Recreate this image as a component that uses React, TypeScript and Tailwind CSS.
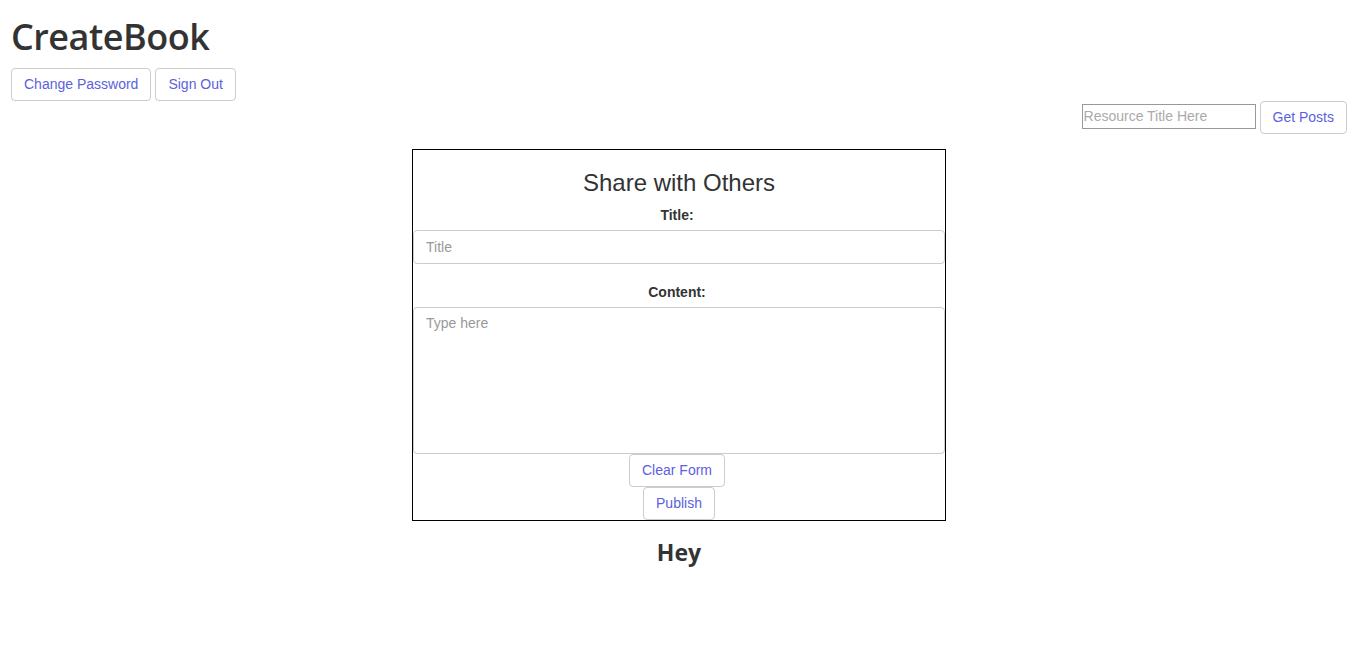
export default function App() {
  const btn =
    "inline-block rounded border border-[#ccc] bg-white px-3 text-sm leading-[19px] py-[6px] text-[#5b5fe0]";
  return (
    <div className="min-h-screen bg-white text-[#333] font-['Liberation_Sans',Arial,sans-serif] text-sm">
      <header className="px-[11px]">
        <h1 className="pt-[17px] font-['Open_Sans',sans-serif] text-[36px] font-semibold leading-[40px] text-[#333] tracking-[-0.5px]">
          CreateBook
        </h1>
        <div className="mt-[11px] flex gap-1">
          <button className={btn}>Change Password</button>
          <button className={btn}>Sign Out</button>
        </div>
      </header>

      <div className="flex justify-end items-start gap-1 pr-[7px]">
        <input
          placeholder="Resource Title Here"
          className="mt-[3px] h-[25px] w-[174px] border border-[#999] px-[1px] pb-[2px] text-sm placeholder:text-[#aaa] outline-none"
        />
        <button className={btn}>Get Posts</button>
      </div>

      <main className="pl-1 mt-[15px] flex flex-col items-center">
        <form className="w-[534px] border border-black flex flex-col items-center">
          <h2 className="mt-[18px] text-[24px] leading-[30px]">Share with Others</h2>
          <label className="mt-[7px] mr-1 font-bold leading-[20px]">Title:</label>
          <input
            placeholder="Title"
            className="mt-[5px] h-[34px] w-full rounded border border-[#ccc] px-3 text-sm placeholder:text-[#999] outline-none"
          />
          <label className="mt-[18px] mr-1 font-bold leading-[20px]">Content:</label>
          <textarea
            placeholder="Type here"
            className="mt-[5px] h-[147px] w-full resize-none rounded border border-[#ccc] px-3 pt-[5px] pb-[6px] text-sm leading-[20px] placeholder:text-[#999] outline-none"
          />
          <button type="button" className={`${btn} mr-1`}>Clear Form</button>
          <button type="button" className={btn}>Publish</button>
        </form>
        <h3 className="mt-[16px] font-['Open_Sans',sans-serif] text-[23px] font-bold leading-[30px]">Hey</h3>
      </main>
    </div>
  );
}
